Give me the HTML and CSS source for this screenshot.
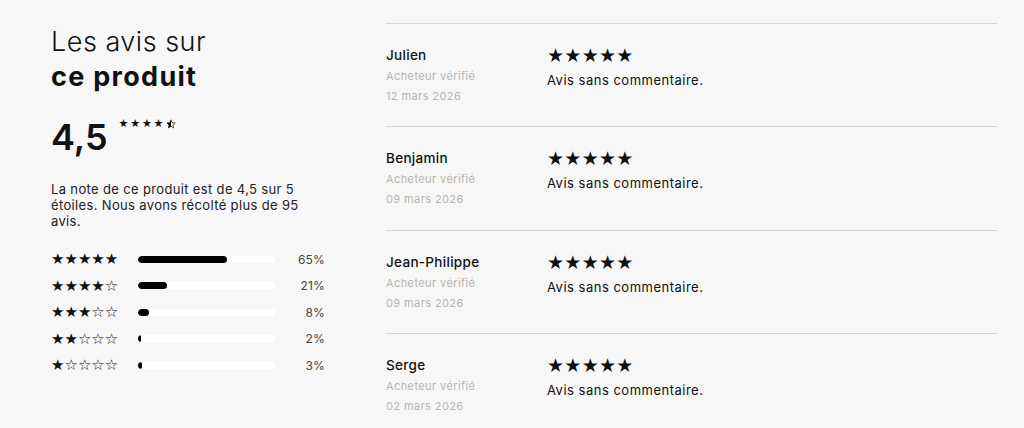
FILE: index.html
```html
<!DOCTYPE html>
<html lang="fr">
<head>
<meta charset="utf-8">
<link rel="stylesheet" href="styles.css">
</head>
<body>
<div class="page">
  <aside class="summary">
    <h2 class="title"><span class="light">Les avis sur</span><br><strong>ce produit</strong></h2>
    <div class="score">
      <span class="score-num">4,5</span>
      <span class="score-stars">★★★★<svg class="half" viewBox="0 0 24 24" width="10" height="10" aria-hidden="true"><defs><clipPath id="lefthalf"><rect x="0" y="0" width="12" height="24"/></clipPath></defs><path d="M12 2l2.9 6.9 7.1.6-5.4 4.7 1.6 7-6.2-3.8-6.2 3.8 1.6-7L2 9.5l7.1-.6z" fill="none" stroke="#000" stroke-width="1.6" stroke-linejoin="round"/><path d="M12 2l2.9 6.9 7.1.6-5.4 4.7 1.6 7-6.2-3.8-6.2 3.8 1.6-7L2 9.5l7.1-.6z" fill="#000" clip-path="url(#lefthalf)"/></svg></span>
    </div>
    <p class="desc">La note de ce produit est de 4,5 sur 5 étoiles. Nous avons récolté plus de 95 avis.</p>
    <div class="dist">
      <div class="dist-row"><span class="dist-stars">★★★★★</span><span class="track"><span class="fill" style="width:65%"></span></span><span class="pct">65%</span></div>
      <div class="dist-row"><span class="dist-stars">★★★★☆</span><span class="track"><span class="fill" style="width:21%"></span></span><span class="pct">21%</span></div>
      <div class="dist-row"><span class="dist-stars">★★★☆☆</span><span class="track"><span class="fill" style="width:8%"></span></span><span class="pct">8%</span></div>
      <div class="dist-row"><span class="dist-stars">★★☆☆☆</span><span class="track"><span class="fill" style="width:2%"></span></span><span class="pct">2%</span></div>
      <div class="dist-row"><span class="dist-stars">★☆☆☆☆</span><span class="track"><span class="fill" style="width:3%"></span></span><span class="pct">3%</span></div>
    </div>
  </aside>
  <section class="reviews">
    <article class="review">
      <div class="author"><div class="name">Julien</div><div class="meta">Acheteur vérifié</div><div class="meta">12 mars 2026</div></div>
      <div class="body"><div class="stars">★★★★★</div><p class="comment">Avis sans commentaire.</p></div>
    </article>
    <article class="review">
      <div class="author"><div class="name">Benjamin</div><div class="meta">Acheteur vérifié</div><div class="meta">09 mars 2026</div></div>
      <div class="body"><div class="stars">★★★★★</div><p class="comment">Avis sans commentaire.</p></div>
    </article>
    <article class="review">
      <div class="author"><div class="name">Jean-Philippe</div><div class="meta">Acheteur vérifié</div><div class="meta">09 mars 2026</div></div>
      <div class="body"><div class="stars">★★★★★</div><p class="comment">Avis sans commentaire.</p></div>
    </article>
    <article class="review">
      <div class="author"><div class="name">Serge</div><div class="meta">Acheteur vérifié</div><div class="meta">02 mars 2026</div></div>
      <div class="body"><div class="stars">★★★★★</div><p class="comment">Avis sans commentaire.</p></div>
    </article>
  </section>
</div>
</body>
</html>
```
FILE: styles.css
```css
* { box-sizing: border-box; }
html, body { margin: 0; padding: 0; }
body {
  background: #f7f7f7;
  color: #111;
  font-family: Inter, "Open Sans", sans-serif;
  height: 428px;
  overflow: hidden;
}
.page {
  display: flex;
  gap: 61px;
  padding: 0 27px 0 51px;
}
.summary {
  width: 274px;
  flex: none;
  padding-top: 24px;
}
.title {
  margin: 0;
  font-size: 27px;
  line-height: 35px;
  font-weight: 400;
}
.title .light { font-weight: 300; letter-spacing: 0.5px; }
.title strong { font-weight: 700; letter-spacing: 1.3px; }
.score {
  display: flex;
  align-items: flex-start;
  margin-top: 23px;
  gap: 11px;
}
.score-num {
  font-size: 36px;
  line-height: 40px;
  font-weight: 600;
}
.score-stars {
  display: flex;
  align-items: center;
  font-family: "DejaVu Sans", sans-serif;
  font-size: 11px;
  line-height: 12px;
  letter-spacing: 1.8px;
  margin-top: 1px;
  white-space: nowrap;
}
.half { display: block; margin-left: 0.5px; }
.desc {
  margin: 24px 0 0;
  font-size: 13px;
  line-height: 16px;
  letter-spacing: 0.35px;
  color: #222;
}
.dist { margin-top: 17px; }
.dist-row {
  display: grid;
  grid-template-columns: 87px 137px 1fr;
  align-items: center;
  height: 26.5px;
}
.dist-stars {
  font-family: "DejaVu Sans", sans-serif;
  font-size: 15px;
  letter-spacing: 0;
  white-space: nowrap;
}
.track {
  display: block;
  height: 7px;
  background: #fff;
  border-radius: 4px;
  overflow: hidden;
}
.fill {
  display: block;
  height: 100%;
  min-width: 3px;
  background: #000;
  border-radius: 4px;
}
.pct {
  text-align: right;
  font-size: 12px;
  color: #444;
  letter-spacing: 0.2px;
}
.reviews {
  flex: 1;
  padding-top: 23px;
}
.review {
  display: grid;
  grid-template-columns: 161px 1fr;
  border-top: 1px solid #d6d6d6;
  padding: 22px 0 20.4px;
}
.name {
  font-size: 13.5px;
  line-height: 18px;
  font-weight: 500;
  letter-spacing: 0.3px;
  margin-bottom: 2px;
}
.meta {
  font-size: 11px;
  line-height: 20px;
  letter-spacing: 0.4px;
  color: #b9b5b0;
}
.stars {
  font-family: "DejaVu Sans", sans-serif;
  font-size: 19px;
  line-height: 18px;
  letter-spacing: 0.3px;
}
.comment {
  margin: 7px 0 0;
  font-size: 13px;
  line-height: 18px;
  letter-spacing: 0.5px;
  color: #111;
}
```
